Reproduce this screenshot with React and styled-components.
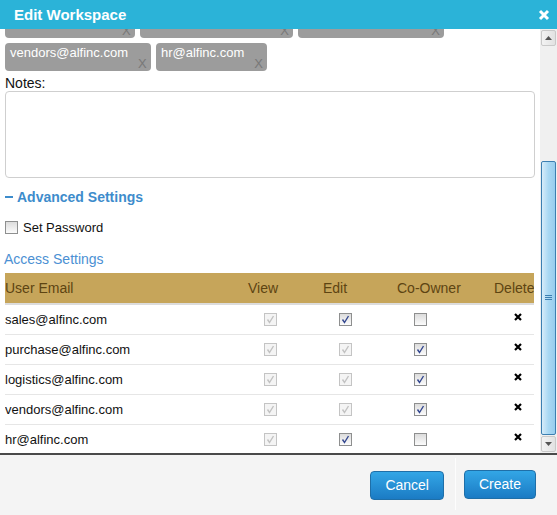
import { Fragment, useLayoutEffect, useRef } from "react";
import styled, { createGlobalStyle } from "styled-components";

const GlobalStyle = createGlobalStyle`
  html, body { margin: 0; padding: 0; background: #fff; }
  body { font-family: "Liberation Sans", Arial, sans-serif; }
`;

const members = [
  "sales@alfinc.com",
  "purchase@alfinc.com",
  "logistics@alfinc.com",
  "vendors@alfinc.com",
  "hr@alfinc.com",
];

const access = [
  { email: "sales@alfinc.com", edit: true, owner: false },
  { email: "purchase@alfinc.com", edit: "locked", owner: true },
  { email: "logistics@alfinc.com", edit: "locked", owner: true },
  { email: "vendors@alfinc.com", edit: "locked", owner: true },
  { email: "hr@alfinc.com", edit: true, owner: false },
];

const Dialog = styled.div`
  width: 557px;
  height: 515px;
  display: flex;
  flex-direction: column;
  overflow: hidden;
  background: #fff;
`;

const Header = styled.div`
  height: 29px;
  flex: none;
  background: #2bb3d8;
  display: flex;
  align-items: center;
  justify-content: space-between;
  padding: 0 7px 0 14px;
  color: #fff;
  font-weight: bold;
  font-size: 15px;
`;

const Body = styled.div`
  height: 424px;
  flex: none;
  display: flex;
  border-bottom: 2px solid #4a4a4a;
`;

const Scroller = styled.div`
  position: relative;
  flex: 1;
  overflow-y: scroll;
  scrollbar-width: none;
  padding: 0 5px 0 5px;
  &::-webkit-scrollbar { display: none; }
`;

const Label = styled.div`
  font-size: 14px;
  line-height: 16px;
  color: #111;
  margin-top: ${(p) => p.$top || 4}px;
`;

const TagList = styled.div`
  display: flex;
  flex-wrap: wrap;
  gap: 5px;
  margin-top: 120px;
`;

const Tag = styled.div`
  height: 28px;
  display: flex;
  background: #9c9c9c;
  border-radius: 4px;
  padding: 0 4px 0 5px;
  color: #fff;
  font-size: 13px;
  box-sizing: border-box;
`;

const TagText = styled.span`
  align-self: flex-start;
  line-height: 15px;
  margin-top: 2px;
`;

const TagRemove = styled.span`
  align-self: flex-end;
  margin-left: 10px;
  width: 9px;
  color: #787878;
  font-size: 13px;
  line-height: 14px;
`;

const Notes = styled.textarea`
  display: block;
  width: 100%;
  height: 87px;
  box-sizing: border-box;
  border: 1px solid #cfcfcf;
  border-radius: 4px;
  resize: none;
  margin: 0;
  outline: none;
`;

const Advanced = styled.div`
  margin-top: 10px;
  line-height: 18px;
  font-size: 14px;
  font-weight: bold;
  color: #3d8ccc;
  display: flex;
  align-items: center;
  gap: 4px;
`;

const Dash = styled.span`
  width: 8px;
  height: 2px;
  background: #3d8ccc;
`;

const CheckRow = styled.label`
  margin-top: 12px;
  height: 18px;
  display: flex;
  align-items: center;
  gap: 5px;
  font-size: 13px;
  color: #111;
`;

const SectionTitle = styled.div`
  margin-top: 14px;
  margin-left: -1px;
  line-height: 18px;
  font-size: 14px;
  color: #4b90d3;
`;

const Grid = styled.div`
  margin-top: 5px;
  display: grid;
  grid-template-columns: 240px 75px 75px 97px 42px;
  overflow: hidden;
`;

const HeadCell = styled.div`
  height: 30px;
  background: #c6a55a;
  border-bottom: 2px solid #dcdcdc;
  color: #5d4412;
  font-size: 14px;
  line-height: 30px;
  padding-left: ${(p) => (p.$first ? 0 : p.$pad || 3)}px;
  white-space: nowrap;
  overflow: hidden;
`;

const Cell = styled.div`
  height: 29px;
  border-bottom: 1px solid #e6e6e6;
  display: flex;
  align-items: center;
  padding-left: ${(p) => p.$pad || 0}px;
  margin-left: ${(p) => p.$shift || 0}px;
  font-size: 13px;
  color: #111;
`;

const Box = styled.span`
  width: 11px;
  height: 11px;
  flex: none;
  border: 1px solid ${(p) => (p.$disabled ? "#c4c4c4" : "#8e8f8f")};
  background: ${(p) =>
    p.$disabled ? "#f4f4f4" : "linear-gradient(#dcdcdc, #fbfbfb)"};
  display: flex;
  align-items: center;
  justify-content: center;
`;

const DeleteMark = styled.svg`
  margin-top: -6px;
`;

const Scrollbar = styled.div`
  width: 17px;
  flex: none;
  background: #f0f0f0;
  display: flex;
  flex-direction: column;
  align-items: center;
  padding: 1px 0;
  box-sizing: border-box;
`;

const ArrowButton = styled.div`
  width: 15px;
  height: 16px;
  box-sizing: border-box;
  border: 1px solid #c9c9c9;
  border-radius: 2px;
  background: linear-gradient(to right, #f3f3f3, #e2e2e2);
  display: flex;
  align-items: center;
  justify-content: center;
`;

const Track = styled.div`
  flex: 1;
  width: 15px;
  display: flex;
  flex-direction: column;
`;

const Thumb = styled.div`
  margin-top: 115px;
  height: 274px;
  box-sizing: border-box;
  border: 1px solid #3c7fb1;
  border-radius: 2px;
  background: linear-gradient(to right, #d7ecf9, #a9d8f3 50%, #97cdee);
  display: flex;
  align-items: center;
  justify-content: center;
`;

const Footer = styled.div`
  flex: 1;
  background: #f4f4f4;
  display: flex;
  justify-content: flex-end;
  align-items: stretch;
  padding: 3px 21px 5px 0;
`;

const ButtonSlot = styled.div`
  display: flex;
  align-items: center;
  padding-left: ${(p) => p.$pad || 0}px;
  margin-right: ${(p) => p.$gap || 0}px;
  border-left: ${(p) => (p.$divided ? "1px solid #fdfdfd" : "none")};
`;

const Button = styled.button`
  height: 29px;
  padding: 0 14px;
  border: 1px solid #1f6fa8;
  border-radius: 4px;
  background: linear-gradient(#33a6e6, #1b7bc4);
  color: #fff;
  font-family: "Liberation Sans", Arial, sans-serif;
  font-size: 14px;
  margin-top: ${(p) => p.$down || 0}px;
`;

function Check({ checked, disabled }) {
  return (
    <Box $disabled={disabled}>
      {checked && (
        <svg width="9" height="9" viewBox="0 0 9 9">
          <path
            d="M1.5 4.5 L3.5 7.5 L7.5 1"
            fill="none"
            stroke={disabled ? "#c2c2c2" : "#33478f"}
            strokeWidth="1.4"
          />
        </svg>
      )}
    </Box>
  );
}

function Arrow({ up }) {
  return (
    <svg width="7" height="4" viewBox="0 0 7 4">
      <path d={up ? "M0 4 L3.5 0 L7 4 Z" : "M0 0 L3.5 4 L7 0 Z"} fill="#555" />
    </svg>
  );
}

export default function App() {
  const scrollRef = useRef(null);
  const anchorRef = useRef(null);

  useLayoutEffect(() => {
    if (scrollRef.current && anchorRef.current) {
      scrollRef.current.scrollTop = anchorRef.current.offsetTop - 14;
    }
  }, []);

  return (
    <>
      <GlobalStyle />
      <Dialog>
        <Header>
          <span>Edit Workspace</span>
          <svg width="12" height="12" viewBox="0 0 12 12">
            <path d="M2 2 L10 10 M10 2 L2 10" stroke="#fff" strokeWidth="3" />
          </svg>
        </Header>
        <Body>
          <Scroller ref={scrollRef}>
            <TagList>
              {members.map((m, i) => (
                <Tag key={m} ref={i === 3 ? anchorRef : null}>
                  <TagText>{m}</TagText>
                  <TagRemove>X</TagRemove>
                </Tag>
              ))}
            </TagList>
            <Label>Notes:</Label>
            <Notes />
            <Advanced>
              <Dash />
              Advanced Settings
            </Advanced>
            <CheckRow>
              <Check />
              Set Password
            </CheckRow>
            <SectionTitle>Access Settings</SectionTitle>
            <Grid>
              <HeadCell $first>User Email</HeadCell>
              <HeadCell>View</HeadCell>
              <HeadCell>Edit</HeadCell>
              <HeadCell $pad={2}>Co-Owner</HeadCell>
              <HeadCell $pad={2}>Delete</HeadCell>
              {access.map((r) => (
                <Fragment key={r.email}>
                  <Cell>{r.email}</Cell>
                  <Cell $pad={19}>
                    <Check checked disabled />
                  </Cell>
                  <Cell $pad={19}>
                    <Check checked disabled={r.edit === "locked"} />
                  </Cell>
                  <Cell $pad={19}>
                    <Check checked={r.owner} />
                  </Cell>
                  <Cell $pad={22}>
                    <DeleteMark width="8" height="8" viewBox="0 0 8 8">
                      <path d="M1 1 L7 7 M7 1 L1 7" stroke="#000" strokeWidth="2.2" />
                    </DeleteMark>
                  </Cell>
                </Fragment>
              ))}
            </Grid>
          </Scroller>
          <Scrollbar>
            <ArrowButton>
              <Arrow up />
            </ArrowButton>
            <Track>
              <Thumb>
                <svg width="7" height="6" viewBox="0 0 7 6">
                  <path d="M0 0.5 H7 M0 2.5 H7 M0 4.5 H7" stroke="#3c7fb1" />
                </svg>
              </Thumb>
            </Track>
            <ArrowButton>
              <Arrow />
            </ArrowButton>
          </Scrollbar>
        </Body>
        <Footer>
          <ButtonSlot $gap={11}>
            <Button $down={2}>Cancel</Button>
          </ButtonSlot>
          <ButtonSlot $pad={8} $divided>
            <Button>Create</Button>
          </ButtonSlot>
        </Footer>
      </Dialog>
    </>
  );
}
